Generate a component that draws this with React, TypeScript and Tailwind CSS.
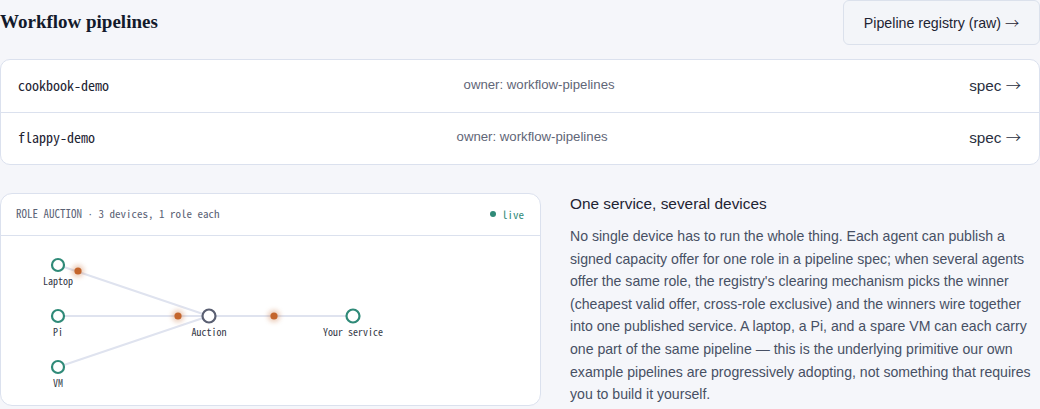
import React from 'react'

const mono = "font-['Noto_Sans_Mono_CJK_SC','DejaVu_Sans_Mono',monospace]"
const sans = "font-['Liberation_Sans','Noto_Sans_CJK_SC',sans-serif]"
const arrow = "font-['Noto_Sans_CJK_SC',sans-serif] font-light"

const pipelines = [
  { name: 'cookbook-demo', owner: 'workflow-pipelines' },
  { name: 'flappy-demo', owner: 'workflow-pipelines' },
]

const teal = '#2f8a78'
const orange = '#c4652c'
const edge = '#dfe3ef'

const Diagram = () => {
  const devices = [
    { label: 'Laptop', x: 57, y: 29 },
    { label: 'Pi', x: 57, y: 80 },
    { label: 'VM', x: 57, y: 131 },
  ]
  const dots = [
    { x: 77, y: 35 },
    { x: 177, y: 80 },
    { x: 273, y: 80 },
  ]
  return (
    <svg width="539" height="168" viewBox="0 0 539 168" className="block">
      <defs>
        <filter id="glow" x="-200%" y="-200%" width="500%" height="500%">
          <feGaussianBlur stdDeviation="2.5" />
        </filter>
      </defs>
      {devices.map((d) => (
        <line key={d.label} x1={d.x} y1={d.y} x2={208} y2={80} stroke={edge} strokeWidth="2" />
      ))}
      <line x1={208} y1={80} x2={352} y2={80} stroke={edge} strokeWidth="2" />
      {dots.map((d, i) => (
        <g key={i}>
          <circle cx={d.x} cy={d.y} r="6" fill={orange} opacity="0.35" filter="url(#glow)" />
          <circle cx={d.x} cy={d.y} r="3.6" fill={orange} />
        </g>
      ))}
      {devices.map((d) => (
        <g key={d.label}>
          <circle cx={d.x} cy={d.y} r="6" fill="white" stroke={teal} strokeWidth="2.2" />
          <text x={d.x} y={d.y + 20} textAnchor="middle" fontSize="10" fill="#333846" className={mono}>
            {d.label}
          </text>
        </g>
      ))}
      <circle cx={208} cy={80} r="6.5" fill="white" stroke="#5a5f72" strokeWidth="2.2" />
      <text x={208} y={100} textAnchor="middle" fontSize="10" fill="#333846" className={mono}>
        Auction
      </text>
      <circle cx={352} cy={80} r="6.5" fill="white" stroke={teal} strokeWidth="2.2" />
      <text x={352} y={100} textAnchor="middle" fontSize="10" fill="#333846" className={mono}>
        Your service
      </text>
    </svg>
  )
}

export default function App() {
  return (
    <div className={`min-h-screen w-[1040px] bg-[#f5f6fa] text-[#1e2433] ${sans}`}>
      <div className="flex items-start justify-between">
        <h2 className="pt-[10px] font-['Liberation_Serif',serif] text-[19px] font-bold leading-[24px] text-[#131a2b]">
          Workflow pipelines
        </h2>
        <button className="h-[45px] w-[197px] rounded-[6px] border border-[#dbe1ec] bg-[#f3f5f9] pb-[1px] text-[14.2px] leading-[20px] text-[#1e2433]">
          Pipeline registry (raw) <span className={arrow}>→</span>
        </button>
      </div>

      <div className="mt-[14px] rounded-[10px] border border-[#dbe1ee] bg-white">
        {pipelines.map((p, i) => (
          <div
            key={p.name}
            className={`flex h-[52px] items-center justify-between pb-[3px] pl-[17px] pr-[18px] ${i > 0 ? 'border-t border-[#dbe1ee]' : ''}`}
          >
            <span className={`${mono} text-[14px] leading-[20px] text-[#1e2433]`}>{p.name}</span>
            <span className="text-[13.2px] leading-[20px] text-[#5f6677]">owner: {p.owner}</span>
            <span className="text-[15.3px] leading-[20px] text-[#2a3040]">
              spec <span className={arrow}>→</span>
            </span>
          </div>
        ))}
      </div>

      <div className="mt-[28px] flex gap-[29px]">
        <div className="w-[541px] shrink-0 rounded-[12px] border border-[#dbe1ee] bg-white">
          <div className="flex h-[42px] items-center justify-between border-b border-[#dbe1ee] pb-[1px] pl-[15px] pr-[16px]">
            <span className={`${mono} text-[11px] text-[#5a6275]`}>
              ROLE AUCTION <span className="font-['DejaVu_Sans_Mono'] text-[9.1px]">·</span> 3 devices, 1 role each
            </span>
            <span className={`${mono} flex items-center gap-[6px] text-[11px] text-[#2f8a78]`}>
              <span className="h-[6px] w-[6px] rounded-full bg-[#2f8a78]" />
              live
            </span>
          </div>
          <Diagram />
        </div>

        <div className="min-w-0 flex-1">
          <h3 className="text-[15.4px] leading-[22px] text-[#1e2433]">One service, several devices</h3>
          <p className="mt-[10px] text-[14.1px] leading-[22.6px] text-[#475064]">
            No single device has to run the whole thing. Each agent can publish a signed capacity offer for one
            role in a pipeline spec; when several agents offer the same role, the registry's clearing mechanism
            picks the winner (cheapest valid offer, cross-role exclusive) and the winners wire together into one
            published service. A laptop, a Pi, and a spare VM can each carry one part of the same pipeline — this
            is the underlying primitive our own example pipelines are progressively adopting, not something that
            requires you to build it yourself.
          </p>
        </div>
      </div>
    </div>
  )
}
